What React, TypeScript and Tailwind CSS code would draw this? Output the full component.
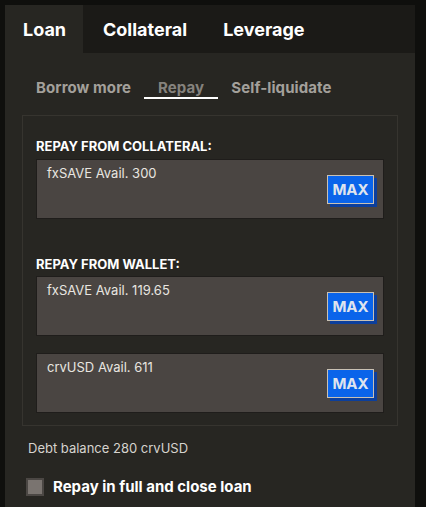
import React, { useState } from 'react';

const font = { fontFamily: 'Inter, "Noto Sans", sans-serif' };

function AmountField({ label }: { label: string }) {
  return (
    <div className="flex h-[60px] items-center justify-between border border-[#1f1d1b] bg-[#4a4542] pl-[10px] pr-[9px]">
      <span className="self-start pt-[4px] text-[13px] leading-[18px] text-[#e8e5e0]">{label}</span>
      <button className="h-[29px] w-[47px] border border-[#c9c1b4] bg-[#0a64ea] text-[15px] font-bold leading-none text-[#dfe4ee] shadow-[3px_3px_0_#0c3f9c]">
        MAX
      </button>
    </div>
  );
}

export default function App() {
  const [closeLoan, setCloseLoan] = useState(false);

  return (
    <div className="min-h-[507px] bg-[#0f0f0d] pl-[5px] pt-[5px] pr-[11px]" style={font}>
      <div className="w-[410px] bg-[#272622]">
        {/* Top tabs */}
        <div className="flex h-[48px] bg-[#1b1a17]">
          <div className="flex w-[78px] items-center bg-[#272622] pl-[18px] text-[18px] font-bold text-white">Loan</div>
          <div className="flex items-center pl-[20px] text-[18px] font-bold text-white">Collateral</div>
          <div className="flex items-center pl-[36px] text-[18px] font-bold text-white">Leverage</div>
        </div>

        {/* Sub tabs */}
        <div className="flex h-[46px] items-end pl-[31px] text-[15px] font-bold leading-[18px] tracking-[0.1px]">
          <span className="pb-[2px] text-[#a3a09b]">Borrow more</span>
          <span className="ml-[13px] border-b-2 border-white px-[14px] text-[#85827d]">Repay</span>
          <span className="ml-[13px] pb-[2px] text-[#a3a09b]">Self-liquidate</span>
        </div>

        <div className="mx-[17px] mt-[16px] border border-[#36342f] px-[13px] pb-[12px] pt-[22px]">
          <div className="mb-[5px] text-[13px] font-bold leading-[16px] text-white">REPAY FROM COLLATERAL:</div>
          <AmountField label="fxSAVE Avail. 300" />

          <div className="mb-[4px] mt-[37px] text-[13px] font-bold leading-[16px] text-white">REPAY FROM WALLET:</div>
          <AmountField label="fxSAVE Avail. 119.65" />
          <div className="mt-[17px]">
            <AmountField label="crvUSD Avail. 611" />
          </div>
        </div>

        <div className="pl-[23px] pt-[13px] text-[13px] leading-[18px] text-[#d6d3ce]">Debt balance 280 crvUSD</div>

        <label className="flex cursor-pointer items-center pb-[10px] pl-[21px] pt-[19px]">
          <span
            className={`h-[18px] w-[18px] border-2 ${closeLoan ? 'border-[#0a64ea] bg-[#0a64ea]' : 'border-[#4b4744] bg-[#7a7470]'}`}
            onClick={() => setCloseLoan(!closeLoan)}
          />
          <span className="ml-[9px] text-[15px] font-bold text-white">Repay in full and close loan</span>
        </label>
      </div>
    </div>
  );
}
